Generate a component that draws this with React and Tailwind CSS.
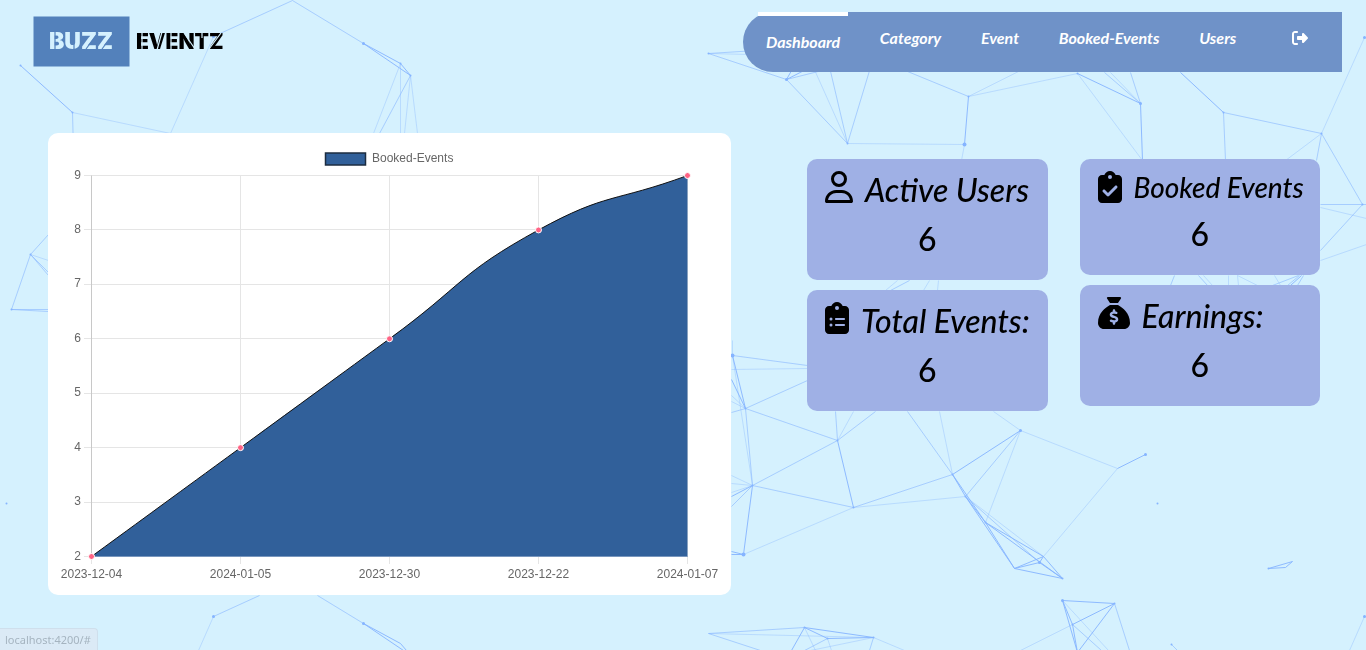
import React from 'react';
import {
  FaRegUser,
  FaClipboardCheck,
  FaClipboardList,
  FaSackDollar,
  FaRightFromBracket,
} from 'react-icons/fa6';

/* Background mesh: [x1, y1, x2, y2] segments grouped by strength */
const FAINT = [
  [72, 112, 170, 133], [170, 133, 213, 36], [400, 63, 373, 133], [400, 63, 400, 133], [410, 75, 404, 133],
  [410, 75, 417, 133], [30, 254, 48, 260], [708, 53, 873, 57], [804, 47, 847, 143], [847, 143, 964, 144],
  [968, 96, 1072, 44], [968, 96, 1077, 73], [1077, 73, 1142, 160], [1110, 72, 1140, 103], [1321, 133, 1364, 37],
  [1321, 133, 1285, 160], [1320, 207, 1366, 218], [1320, 260, 1366, 244], [731, 369, 807, 368], [731, 395, 745, 408],
  [731, 401, 745, 408], [732, 355, 752, 485], [837, 440, 853, 411], [752, 485, 731, 475], [752, 485, 731, 483],
  [752, 485, 731, 492], [743, 554, 853, 507], [853, 507, 965, 496], [952, 474, 939, 411], [985, 522, 1020, 430],
  [1020, 430, 993, 411], [1020, 430, 1117, 468], [1117, 468, 1043, 556], [965, 496, 1043, 556], [708, 633, 873, 637],
  [804, 627, 815, 650], [873, 637, 904, 650], [873, 637, 810, 650], [1062, 600, 1108, 650], [1072, 624, 1020, 650],
  [213, 616, 198, 650], [1364, 616, 1349, 650], [897, 280, 885, 290], [929, 280, 923, 290], [938, 280, 937, 290],
  [1228, 275, 1228, 285], [1237, 275, 1238, 285], [1237, 275, 1257, 285], [1274, 275, 1280, 285], [1203, 275, 1212, 285],
  [732, 340, 732, 355], [831, 650, 827, 638], [961, 160, 964, 144],
];
const MEDIUM = [
  [72, 112, 74, 190], [213, 36, 292, 0], [292, 0, 363, 43], [410, 75, 379, 133], [30, 254, 48, 234],
  [30, 254, 48, 272], [30, 254, 48, 275], [30, 254, 11, 309], [11, 309, 48, 309], [11, 309, 48, 311],
  [708, 53, 804, 47], [708, 53, 786, 79], [786, 79, 873, 57], [786, 79, 847, 143], [827, 58, 847, 143],
  [873, 57, 847, 143], [873, 57, 968, 96], [1104, 72, 1140, 103], [1130, 72, 1140, 103], [1223, 112, 1321, 133],
  [1223, 112, 1225, 160], [1321, 133, 1316, 160], [1321, 133, 1362, 204], [1320, 204, 1366, 204], [1362, 204, 1320, 250],
  [732, 355, 807, 365], [731, 412, 745, 408], [745, 408, 807, 380], [745, 408, 837, 440], [745, 408, 752, 485],
  [837, 440, 752, 485], [837, 440, 835, 411], [837, 440, 875, 411], [752, 485, 853, 507], [752, 485, 731, 506],
  [853, 507, 952, 474], [952, 474, 907, 411], [965, 496, 1020, 430], [965, 496, 1039, 562], [708, 633, 760, 650],
  [708, 633, 804, 627], [827, 638, 804, 650], [873, 637, 869, 650], [1114, 603, 1129, 650], [1072, 624, 1101, 650],
  [213, 616, 259, 595], [317, 595, 363, 623], [1171, 644, 1177, 650], [20, 645, 26, 650], [909, 280, 890, 290],
  [1174, 275, 1170, 285], [1198, 275, 1207, 285], [1298, 275, 1272, 285], [1299, 275, 1287, 285], [1303, 275, 1297, 285],
];
const STRONG = [
  [20, 65, 72, 112], [363, 43, 400, 63], [363, 43, 410, 75], [400, 63, 410, 75], [786, 79, 804, 47],
  [786, 79, 827, 58], [968, 96, 964, 144], [1077, 73, 1140, 103], [1140, 103, 1142, 160], [1180, 72, 1223, 112],
  [732, 355, 745, 408], [731, 379, 745, 408], [837, 440, 853, 507], [752, 485, 731, 496], [752, 485, 743, 554],
  [743, 554, 731, 551], [743, 554, 731, 554], [952, 474, 1020, 430], [952, 474, 965, 496], [952, 474, 985, 522],
  [965, 496, 985, 522], [965, 496, 1014, 568], [985, 522, 1014, 568], [985, 522, 1043, 556], [985, 522, 1062, 578],
  [1014, 568, 1043, 556], [1014, 568, 1039, 562], [1014, 568, 1062, 578], [1043, 556, 1039, 562], [1043, 556, 1062, 578],
  [1039, 562, 1062, 578], [1117, 468, 1145, 454], [1268, 568, 1292, 561], [1292, 561, 1285, 567], [1285, 567, 1268, 568],
  [804, 627, 791, 650], [804, 627, 827, 638], [804, 627, 873, 637], [827, 638, 873, 637], [1062, 600, 1114, 603],
  [1062, 600, 1072, 624], [1062, 600, 1077, 652], [1114, 603, 1072, 624], [1114, 603, 1077, 652], [1072, 624, 1077, 652],
  [363, 623, 400, 643], [363, 623, 403, 650], [400, 643, 406, 650], [1301, 275, 1290, 285],
];
const DOTS = [
  [20, 65, 1], [72, 112, 1], [213, 36, 1.5], [363, 43, 1.5], [400, 63, 1], [410, 75, 1], [708, 53, 1], [786, 79, 1.5],
  [847, 143, 1], [968, 96, 1], [964, 144, 2], [1077, 73, 1], [1140, 103, 1.5], [1223, 112, 1], [1321, 133, 1],
  [1364, 37, 1.5], [1362, 204, 1], [732, 355, 2], [745, 408, 1], [837, 440, 1], [752, 485, 1], [853, 507, 1],
  [743, 554, 2], [952, 474, 1], [965, 496, 1], [985, 522, 1], [1020, 430, 1.5], [1145, 454, 1.5], [1062, 578, 1],
  [1039, 562, 1.5], [1157, 503, 1], [6, 503, 1], [1268, 568, 1], [1062, 600, 1.5], [1114, 603, 1], [1072, 624, 1],
  [1364, 616, 1.5], [213, 616, 1.5], [363, 623, 1.5], [804, 627, 1], [827, 638, 1], [873, 637, 1], [1171, 644, 1],
  [30, 254, 1], [11, 309, 1],
];

const toPath = (segments) => segments.map(([a, b, c, d]) => `M${a} ${b}L${c} ${d}`).join('');

function Mesh() {
  return (
    <svg className="pointer-events-none fixed inset-0 -z-10 h-full w-full" aria-hidden="true">
      <g transform="translate(0.5 0.5)" fill="none" stroke="#85b4ff">
        <path d={toPath(FAINT)} strokeOpacity="0.36" />
        <path d={toPath(MEDIUM)} strokeOpacity="0.58" />
        <path d={toPath(STRONG)} strokeOpacity="0.9" />
        <g fill="#85b4ff" stroke="none">
          {DOTS.map(([x, y, r]) => (
            <circle key={`${x}-${y}`} cx={x} cy={y} r={r} />
          ))}
        </g>
      </g>
    </svg>
  );
}

function Logo() {
  return (
    <a href="#" aria-label="Buzz Eventz" className="block">
      <svg width="200" height="52" viewBox="0 0 200 52" className="font-[Inter,sans-serif] font-black">
        <rect x="0.5" y="0.5" width="96" height="50" fill="#5381bb" />
        <text x="16" y="33" fontSize="23" fill="#d5f1fe">BUZZ</text>
        <text x="103" y="33" fontSize="21" fill="#000">EVENTZ</text>
        <g stroke="#5381bb" strokeWidth="1.2">
          <path d="M22 16v18M41 27v7M53 33l12-16M69 33l12-16" />
        </g>
        <g stroke="#d5f1fe" strokeWidth="1.2">
          <path d="M109 16v18M124 34l5-18M138 16v18M151 17l11 16M169 16v6M176 33l12-16" />
        </g>
      </svg>
    </a>
  );
}

const LINKS = ['Dashboard', 'Category', 'Event', 'Booked-Events', 'Users'];

function Nav() {
  return (
    <nav className="h-15 w-[599px] rounded-l-[30px] bg-[#6f92c8] pr-[26px] pl-[15px]">
      <ul className="flex justify-between">
        {LINKS.map((label, i) => (
          <li key={label}>
            <a
              href="#"
              className={
                i === 0
                  ? 'block border-t-4 border-white px-2 py-3 text-base leading-7 font-bold text-white italic'
                  : 'block px-2 py-3 text-base leading-7 font-bold text-white italic'
              }
            >
              {label}
            </a>
          </li>
        ))}
        <li className="pl-4">
          <button type="button" aria-label="Log out" className="block px-2 py-[18px] text-white">
            <FaRightFromBracket className="size-4" />
          </button>
        </li>
      </ul>
    </nav>
  );
}

/* Chart geometry, in viewBox units */
const LABELS = ['2023-12-04', '2024-01-05', '2023-12-30', '2023-12-22', '2024-01-07'];
const VALUES = [2, 4, 6, 8, 9];
const LEFT = 43.5;
const TOP = 42.5;
const BOTTOM = 423.5;
const STEP_X = 149;
const STEP_Y = (BOTTOM - TOP) / 7;
const points = VALUES.map((v, i) => [LEFT + i * STEP_X, BOTTOM - (v - 2) * STEP_Y]);

function smoothPath(pts, tension) {
  const clamp = (y) => Math.min(BOTTOM, Math.max(TOP, y));
  const controls = pts.map((p, i) => {
    const prev = pts[i - 1] || p;
    const next = pts[i + 1] || p;
    const before = Math.hypot(p[0] - prev[0], p[1] - prev[1]);
    const after = Math.hypot(next[0] - p[0], next[1] - p[1]);
    const a = (tension * before) / (before + after);
    const b = (tension * after) / (before + after);
    const dx = next[0] - prev[0];
    const dy = next[1] - prev[1];
    return [p[0] - a * dx, clamp(p[1] - a * dy), p[0] + b * dx, clamp(p[1] + b * dy)];
  });
  return pts.reduce((d, p, i) => {
    if (i === 0) return `M${p[0]} ${p[1]}`;
    const c = controls[i - 1];
    const e = controls[i];
    return `${d}C${c[2]} ${c[3]} ${e[0]} ${e[1]} ${p[0]} ${p[1]}`;
  }, '');
}

function Chart() {
  const line = smoothPath(points, 0.5);
  const right = LEFT + 4 * STEP_X;
  return (
    <section className="overflow-hidden rounded-[10px] bg-white">
      <svg viewBox="0 0 683 462" className="block w-full font-['Liberation_Sans',Arial,sans-serif] text-[12px]" role="img" aria-label="Booked-Events">
        <g stroke="#e5e5e5">
          {[2, 3, 4, 5, 6, 7, 8, 9].map((v) => {
            const y = Math.floor(BOTTOM - (v - 2) * STEP_Y) + 0.5;
            return <path key={v} d={`M36 ${y}H${right}`} />;
          })}
          {LABELS.map((l, i) => (
            <path key={l} d={`M${LEFT + i * STEP_X} ${TOP}V431`} />
          ))}
        </g>
        <path d={`M${LEFT} ${TOP}V${BOTTOM}H${right}`} fill="none" stroke="#c8c8c8" />
        <path d={`${line}V${BOTTOM}H${LEFT}Z`} fill="#31609a" />
        <path d={`M${LEFT} ${BOTTOM}H${right}`} stroke="#7896bd" />
        <path d={line} fill="none" stroke="#111" />
        {points.map(([x, y]) => (
          <circle key={x} cx={x} cy={y} r="3" fill="#ff6384" stroke="#fff" />
        ))}
        <rect x="277.5" y="20" width="40" height="12" fill="#31609a" stroke="#1c2c40" strokeWidth="1.5" />
        <g fill="#666">
          <text x="324" y="29">Booked-Events</text>
          {[2, 3, 4, 5, 6, 7, 8, 9].map((v) => (
            <text key={v} x="33" y={Math.round(BOTTOM - (v - 2) * STEP_Y) + 3} textAnchor="end">{v}</text>
          ))}
          {LABELS.map((l, i) => (
            <text key={l} x={LEFT + i * STEP_X} y="445" textAnchor="middle">{l}</text>
          ))}
        </g>
      </svg>
    </section>
  );
}

function Card({ icon, title, value, compact }) {
  return (
    <article className="rounded-[10px] bg-[#9fb0e5] px-[18px] pt-3 pb-[19px] text-black">
      <h2
        className={
          compact
            ? 'flex gap-3 text-[28px] leading-[33px] font-medium whitespace-nowrap italic'
            : 'flex gap-3 text-[32px] leading-[38px] font-medium whitespace-nowrap italic'
        }
      >
        {icon}
        {title}
      </h2>
      <p className="pt-2 text-center text-[32px] leading-[44px] font-medium">{value}</p>
    </article>
  );
}

export default function App() {
  return (
    <div className="isolate min-h-screen bg-[#d5f1fe] font-[Lato,'Noto_Sans',sans-serif]">
      <Mesh />
      <header className="flex items-start justify-between pt-3 pr-6 pl-[33px]">
        <div className="pt-1">
          <Logo />
        </div>
        <Nav />
      </header>
      <main className="grid grid-cols-[683fr_513fr] items-start gap-x-[76px] pt-[61px] pr-[46px] pl-12">
        <Chart />
        <div className="grid grid-cols-2 items-start gap-x-8 pt-[26px]">
          <div className="flex flex-col gap-[10px]">
            <Card icon={<FaRegUser className="h-8 w-7 shrink-0" />} title="Active Users" value="6" />
            <Card icon={<FaClipboardList className="h-8 w-6 shrink-0" />} title="Total Events:" value="6" />
          </div>
          <div className="flex flex-col gap-[10px]">
            <Card icon={<FaClipboardCheck className="h-8 w-6 shrink-0" />} title="Booked Events" value="6" compact />
            <Card icon={<FaSackDollar className="size-8 shrink-0" />} title="Earnings:" value="6" />
          </div>
        </div>
      </main>
      <div className="fixed bottom-0 left-0 rounded-tr border-t border-r border-[#cfdfec] bg-[#dbe9f5]/90 pr-[6px] pl-[5px] font-['Noto_Sans',sans-serif] text-[11px] leading-[21px] text-[#a5b4c0]">
        localhost:4200/#
      </div>
    </div>
  );
}
